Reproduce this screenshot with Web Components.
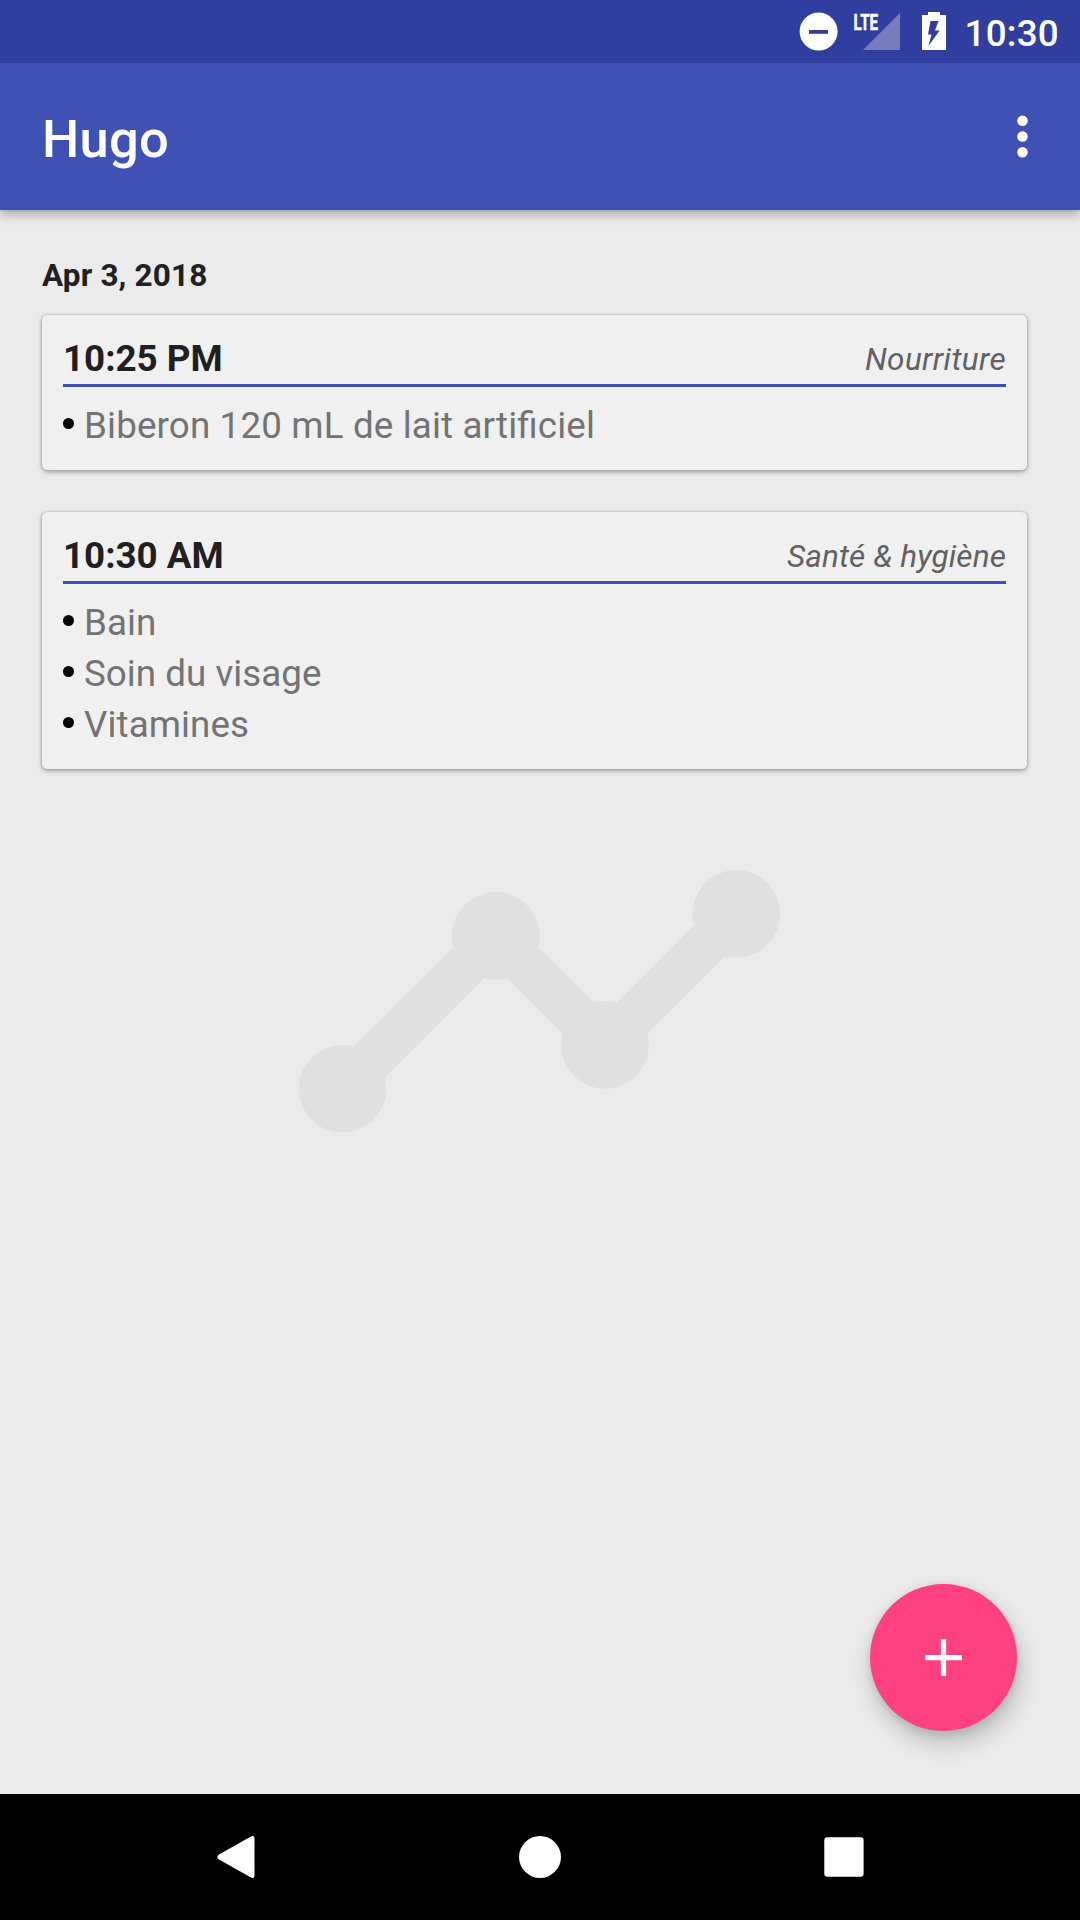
<!DOCTYPE html>
<html lang="fr">
<head>
<meta charset="utf-8">
<title>Hugo</title>
<style>
html,body{margin:0;padding:0;height:100%}
body{background:#ebebeb;font-family:Roboto,"Noto Sans",sans-serif;overflow:hidden}
</style>
</head>
<body>
<baby-app>
  <status-bar slot="status" time="10:30"></status-bar>
  <app-bar slot="header">Hugo</app-bar>
  <day-section date="Apr 3, 2018">
    <event-card time="10:25 PM" category="Nourriture" style="--category-spacing:.38px">
      <event-item style="--item-spacing:.15px">Biberon 120 mL de lait artificiel</event-item>
    </event-card>
    <event-card time="10:30 AM" category="Santé &amp; hygiène">
      <event-item>Bain</event-item>
      <event-item>Soin du visage</event-item>
      <event-item style="--item-spacing:.1px">Vitamines</event-item>
    </event-card>
  </day-section>
  <add-button slot="fab"></add-button>
  <nav-bar slot="nav"></nav-bar>
</baby-app>
<script>
const define = (name, template) => customElements.define(name, class extends HTMLElement {
  constructor() {
    super();
    this.attachShadow({ mode: 'open' });
    this.shadowRoot.innerHTML = template;
  }
  connectedCallback() {
    this.shadowRoot.querySelectorAll('[data-attr]').forEach(el => {
      el.textContent = this.getAttribute(el.dataset.attr) || '';
    });
  }
});

define('baby-app', `
<style>
:host{display:flex;flex-direction:column;width:1080px;height:1920px;background:#ebebeb}
.status{position:relative;z-index:2}
.header{position:relative;z-index:1}
main{position:relative;flex:1;min-height:0}
.mark{position:absolute;left:50%;top:50%;width:525px;height:525px;transform:translate(calc(-50% - .5px),calc(-50% - .7px));fill:#e0e0e0}
.content{position:relative}
.fab{position:absolute;right:63px;bottom:63px}
</style>
<div class="status"><slot name="status"></slot></div>
<div class="header"><slot name="header"></slot></div>
<main>
  <svg class="mark" viewBox="0 0 24 24"><path d="M23 8c0 1.1-.9 2-2 2-.18 0-.35-.02-.51-.07l-3.56 3.55c.05.16.07.34.07.52 0 1.1-.9 2-2 2s-2-.9-2-2c0-.18.02-.36.07-.52l-2.55-2.55c-.16.05-.34.07-.52.07s-.36-.02-.52-.07l-4.55 4.56c.05.16.07.33.07.51 0 1.1-.9 2-2 2s-2-.9-2-2 .9-2 2-2c.18 0 .35.02.51.07l4.56-4.55C8.02 9.36 8 9.18 8 9c0-1.1.9-2 2-2s2 .9 2 2c0 .18-.02.36-.07.52l2.55 2.55c.16-.05.34-.07.52-.07s.36.02.52.07l3.55-3.56C19.02 8.35 19 8.18 19 8c0-1.1.9-2 2-2s2 .9 2 2z"/></svg>
  <div class="content"><slot></slot></div>
  <div class="fab"><slot name="fab"></slot></div>
</main>
<slot name="nav"></slot>`);

define('status-bar', `
<style>
:host{display:flex;flex:none;height:63px;box-sizing:border-box;justify-content:flex-end;align-items:flex-start;padding-right:21px;background:#303f9f;color:#fff}
svg{display:block;flex:none;fill:#fff}
span{font-size:36.75px;font-weight:500;line-height:43px;margin-top:12px;margin-left:-1.2px;letter-spacing:.25px}
text{font-family:Roboto,sans-serif;font-weight:700;stroke:#fff;stroke-width:.5px}
</style>
<svg width="50" height="63" viewBox="799 0 50 63"><circle cx="818.6" cy="31.6" r="19"/><rect x="809" y="30" width="19" height="3.8" fill="#303f9f"/></svg>
<svg width="67" height="63" viewBox="849 0 67 63"><path d="M863 50H900V13z" fill="#757dbc"/><text x="853.6" y="30" font-size="22.9" textLength="24.5" lengthAdjust="spacingAndGlyphs">LTE</text></svg>
<svg width="50" height="63" viewBox="916 0 50 63"><path fill-rule="evenodd" d="M928 12H940V15H946V50H922V15H928zM930.500 21H938.500L935 30.500H939.700L928.400 46L931.500 34.500H928z"/></svg>
<span data-attr="time"></span>`);

define('app-bar', `
<style>
:host{display:flex;height:147px;box-sizing:border-box;align-items:center;justify-content:space-between;padding:0 26px 0 42px;background:#3f51b5;color:#fff;box-shadow:0 5px 10px rgba(0,0,0,.26),0 0 4px rgba(0,0,0,.15)}
h1{margin:4px 0 0;font-size:52.5px;font-weight:500;line-height:62px;letter-spacing:.3px}
svg{display:block;width:63px;height:63px;fill:#fff}
</style>
<h1><slot></slot></h1>
<svg viewBox="0 0 24 24"><circle cx="12" cy="6" r="2"/><circle cx="12" cy="12" r="2"/><circle cx="12" cy="18" r="2"/></svg>`);

define('day-section', `
<style>
:host{display:flex;flex-direction:column;padding:47px 53px 0 42px}
h2{margin:0 0 21px;font-size:31.5px;line-height:37px;font-weight:700;color:#202020;letter-spacing:.16px}
.cards{display:flex;flex-direction:column;gap:42px}
</style>
<h2 data-attr="date"></h2>
<div class="cards"><slot></slot></div>`);

define('event-card', `
<style>
:host{display:flex;flex-direction:column;box-sizing:border-box;padding:21px 21px 23px;border-radius:5.25px;background:#f0f0f0;box-shadow:0 2px 5px rgba(0,0,0,.3),0 0 3px rgba(0,0,0,.22)}
header{display:flex;justify-content:space-between;align-items:flex-start;height:48px;border-bottom:3px solid #3f51b5}
.time{font-size:36.75px;line-height:43px;margin-top:1px;font-weight:700;color:#202020}
.category{font-size:31.5px;line-height:37px;margin-top:5px;font-style:italic;color:#616161;letter-spacing:var(--category-spacing,.12px)}
.items{display:flex;flex-direction:column;padding-top:17px;gap:8px}
</style>
<header><span class="time" data-attr="time"></span><span class="category" data-attr="category"></span></header>
<div class="items"><slot></slot></div>`);

define('event-item', `
<style>
:host{display:flex;gap:10px;font-size:36.75px;line-height:43px;color:#737373;letter-spacing:var(--item-spacing,.03px);font-feature-settings:"liga" 1}
i{flex:none;width:11px;height:11px;margin-top:14px;border-radius:50%;background:#000}
</style>
<i></i><span><slot></slot></span>`);

define('add-button', `
<style>
:host{display:flex;width:147px;height:147px;border-radius:50%;background:#ff4081;box-shadow:3px 12px 22px rgba(0,0,0,.21),0 2px 9px rgba(0,0,0,.1);align-items:center;justify-content:center}
svg{width:63px;height:63px;fill:#fff}
</style>
<svg viewBox="0 0 24 24"><path d="M19 13h-6v6h-2v-6H5v-2h6V5h2v6h6v2z"/></svg>`);

define('nav-bar', `
<style>
:host{display:flex;flex:none;height:126px;background:#000;align-items:center;justify-content:center}
svg{display:block;width:1080px;height:126px;fill:#fff}
</style>
<svg viewBox="0 1794 1080 126"><path d="M219 1854.500L250.500 1836.700Q254.500 1834.500 254.500 1839V1875Q254.500 1879.500 250.500 1877.300L219 1859.500Q215.500 1857 219 1854.500z"/><circle cx="540" cy="1857" r="21"/><rect x="824.300" y="1837.200" width="39.300" height="39.600" rx="3"/></svg>`);
</script>
</body>
</html>
